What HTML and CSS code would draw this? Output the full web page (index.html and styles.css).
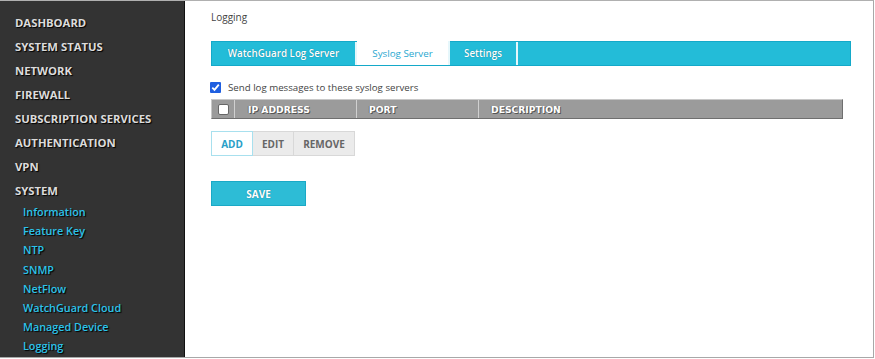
FILE: index.html
```html
<!DOCTYPE html>
<html>
<head>
<meta charset="utf-8">
<link rel="stylesheet" href="styles.css">
</head>
<body>
<div class="frame">
  <nav class="sidebar">
    <div class="nav-item">DASHBOARD</div>
    <div class="nav-item">SYSTEM STATUS</div>
    <div class="nav-item">NETWORK</div>
    <div class="nav-item">FIREWALL</div>
    <div class="nav-item">SUBSCRIPTION SERVICES</div>
    <div class="nav-item">AUTHENTICATION</div>
    <div class="nav-item">VPN</div>
    <div class="nav-item">SYSTEM</div>
    <div class="sub-list">
      <div class="sub-item">Information</div>
      <div class="sub-item">Feature Key</div>
      <div class="sub-item">NTP</div>
      <div class="sub-item">SNMP</div>
      <div class="sub-item">NetFlow</div>
      <div class="sub-item">WatchGuard Cloud</div>
      <div class="sub-item">Managed Device</div>
      <div class="sub-item">Logging</div>
    </div>
  </nav>
  <main class="content">
    <div class="page-title">Logging</div>
    <div class="tabs">
      <div class="tab tab-wg">WatchGuard Log Server</div>
      <div class="tab tab-active">Syslog Server</div>
      <div class="tab tab-settings">Settings</div>
      <div class="tab-fill"></div>
    </div>
    <label class="check-row">
      <span class="check-box"><svg width="9" height="9" viewBox="0 0 9 9"><path d="M1.3 4.6 L3.5 6.9 L7.8 1.6" fill="none" stroke="#fff" stroke-width="1.8"/></svg></span>
      <span class="check-label">Send log messages to these syslog servers</span>
    </label>
    <div class="table-head">
      <div class="th th-check"><span class="head-box"></span></div>
      <div class="th th-ip">IP ADDRESS</div>
      <div class="th th-port">PORT</div>
      <div class="th th-desc">DESCRIPTION</div>
    </div>
    <div class="btn-group">
      <div class="btn btn-add">ADD</div>
      <div class="btn btn-edit">EDIT</div>
      <div class="btn btn-remove">REMOVE</div>
    </div>
    <div class="save">SAVE</div>
  </main>
</div>
</body>
</html>
```

FILE: styles.css
```css
html, body {
  margin: 0;
  padding: 0;
  background: #fff;
}
.frame {
  display: flex;
  width: 874px;
  height: 358px;
  box-sizing: border-box;
  border-top: 1px solid #b0b0b0;
  border-right: 1px solid #a8a8a8;
  border-bottom: 1px solid #a8a8a8;
  font-family: "Open Sans", "Liberation Sans", sans-serif;
}
.sidebar {
  width: 185px;
  flex: none;
  background: #333333;
  border-right: 1px solid #111;
  padding-top: 13px;
  box-sizing: border-box;
  height: 356px;
  overflow: hidden;
}
.nav-item {
  height: 24px;
  line-height: 18px;
  padding-left: 15px;
  font-size: 11.3px;
  font-weight: 700;
  color: #dcdcdc;
  text-shadow: 1px 1px 1px #000;
}
.sub-list {
  margin-top: -3px;
}
.sub-item {
  height: 19.2px;
  line-height: 18px;
  padding-left: 23px;
  font-size: 10.8px;
  font-weight: 600;
  color: #2cc3ea;
  text-shadow: 1px 1px 1px #000;
}
.content {
  flex: 1;
  padding-left: 26px;
  padding-right: 22px;
}
.page-title {
  font-size: 10px;
  color: #444;
  margin-top: 9px;
  line-height: 15px;
}
.tabs {
  display: flex;
  margin-top: 16px;
  height: 25px;
  background: #23bcd8;
  border: 1px solid #14a9c9;
  box-sizing: border-box;
}
.tab {
  display: flex;
  align-items: center;
  justify-content: center;
  font-size: 9.8px;
  font-weight: 600;
  color: #fff;
  text-shadow: 0 0 1px #0b6f88;
  border-right: 2px solid #e6f7fb;
  box-sizing: border-box;
}
.tab-wg { width: 145px; }
.tab-active {
  width: 93px;
  background: #fff;
  color: #2aa8d0;
  font-weight: 400;
  text-shadow: none;
  margin-top: -1px;
  height: 24px;
}
.tab-settings { width: 68px; }
.tab-fill { flex: 1; }
.check-row {
  display: flex;
  align-items: center;
  margin-top: 15px;
  height: 12px;
}
.check-box {
  width: 11px;
  height: 11px;
  background: #1f5fe0;
  border-radius: 1px;
  display: flex;
  align-items: center;
  justify-content: center;
  margin-left: -1px;
}
.check-label {
  margin-left: 7px;
  font-size: 9.7px;
  color: #444;
}
.table-head {
  display: flex;
  margin-top: 6px;
  width: 632px;
  height: 20px;
  background: #9b9b9b;
  border: 1px solid #6f6f6f;
  border-top-color: #c8c8c8;
  border-left-color: #c8c8c8;
  box-sizing: border-box;
}
.th {
  display: flex;
  align-items: center;
  font-family: "DejaVu Sans", sans-serif;
  font-size: 9.2px;
  font-weight: 700;
  color: #fff;
  text-shadow: 1px 1px 0 #555, -1px 0 0 #777;
  border-right: 1px solid #d0d0d0;
  box-sizing: border-box;
}
.th-check { width: 23px; justify-content: center; }
.head-box {
  width: 9px;
  height: 9px;
  background: #fff;
  border: 1px solid #666;
  border-radius: 2px;
}
.th-ip { width: 122px; padding-left: 13px; }
.th-port { width: 122px; padding-left: 12px; }
.th-desc { flex: 1; padding-left: 12px; border-right: none; }
.btn-group {
  display: flex;
  margin-top: 12px;
  height: 25px;
}
.btn {
  display: flex;
  align-items: center;
  justify-content: center;
  font-size: 10px;
  font-weight: 700;
  box-sizing: border-box;
  border: 1px solid #d8d8d8;
  background: #ebebeb;
  color: #666;
}
.btn-add {
  width: 42px;
  background: #fff;
  border-color: #a8e0ee;
  color: #2a9fc8;
}
.btn-edit { width: 41px; border-left: none; }
.btn-remove { width: 61px; border-left: none; }
.save {
  margin-top: 25px;
  width: 95px;
  height: 25px;
  background: #2dbcd6;
  border: 1px solid #1aa9c6;
  box-sizing: border-box;
  display: flex;
  align-items: center;
  justify-content: center;
  color: #fff;
  font-size: 10px;
  font-weight: 700;
  text-shadow: 0 0 1px #0b6f88;
}
```
